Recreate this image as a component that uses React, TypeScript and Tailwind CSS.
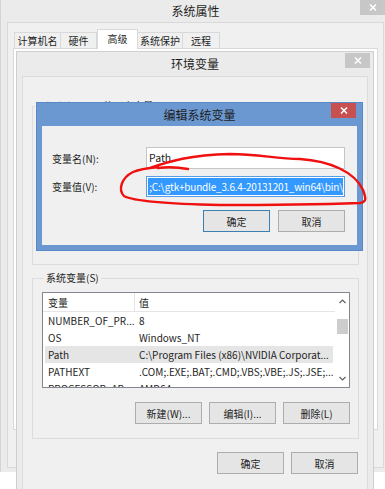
import React from 'react';

type Row = { name: string; value: string; selected?: boolean };

const rows: Row[] = [
  { name: 'NUMBER_OF_PR...', value: '8' },
  { name: 'OS', value: 'Windows_NT' },
  { name: 'Path', value: 'C:\\Program Files (x86)\\NVIDIA Corporat...', selected: true },
  { name: 'PATHEXT', value: '.COM;.EXE;.BAT;.CMD;.VBS;.VBE;.JS;.JSE;...' },
  { name: 'PROCESSOR_AR...', value: 'AMD64' },
];

function CloseBtn({ red = false }: { red?: boolean }) {
  return (
    <div className={`flex h-[15px] w-[25px] items-center justify-center ${red ? 'bg-[#c75050]' : 'bg-[#c7c7c7]'}`}>
      <svg width="8" height="7" viewBox="0 0 8 7">
        <path d="M1 0.5 L7 6.5 M7 0.5 L1 6.5" stroke="white" strokeWidth="1.5" />
      </svg>
    </div>
  );
}

function WinButton({ label, primary = false }: { label: string; primary?: boolean }) {
  return (
    <div
      className={`flex h-[22px] w-[67px] items-center justify-center border bg-[#e5e5e5] text-[10px] ${
        primary ? 'border-[#3c7fb1]' : 'border-[#adadad]'
      }`}
    >
      {label}
    </div>
  );
}

function Chevron({ down = false }: { down?: boolean }) {
  return (
    <svg width="7" height="5" viewBox="0 0 7 5">
      <path d={down ? 'M0.5 1 L3.5 4 L6.5 1' : 'M0.5 4 L3.5 1 L6.5 4'} stroke="#606060" strokeWidth="1.2" fill="none" />
    </svg>
  );
}

export default function App() {
  return (
    <div className="relative h-[489px] w-[385px] overflow-hidden bg-white font-['Noto_Sans_CJK_SC',sans-serif] text-[10px] text-[#1e1e1e]">
      {/* 系统属性 */}
      <div className="absolute left-0 top-0 flex h-[472px] w-[390px] flex-col border-l border-[#d4d4d4] bg-[#ebebeb]">
        <div className="grid h-[22px] grid-cols-[1fr_auto_1fr]">
          <div />
          <div className="pt-[3px] text-[12px] leading-[15px]">系统属性</div>
          <div className="flex justify-end pr-[5px]">
            <CloseBtn />
          </div>
        </div>
        <div className="mx-[6px] mb-[4px] flex-1 border border-[#d9d9d9] bg-[#f0f0f0] px-[5px] pt-[6px]">
          <div className="ml-px flex h-[19px] items-end">
            <div className="flex h-[16px] w-[47px] items-center justify-center border border-b-0 border-[#d9d9d9] bg-[#f0f0f0]">计算机名</div>
            <div className="flex h-[16px] w-[36px] items-center justify-center border border-b-0 border-l-0 border-[#d9d9d9] bg-[#f0f0f0]">硬件</div>
            <div className="relative z-10 -mb-px flex h-[20px] w-[41px] items-center justify-center border border-b-0 border-[#d9d9d9] bg-white pb-[2px]">高级</div>
            <div className="flex h-[16px] w-[45px] items-center justify-center border border-b-0 border-l-0 border-[#d9d9d9] bg-[#f0f0f0]">系统保护</div>
            <div className="flex h-[16px] w-[37px] items-center justify-center border border-b-0 border-l-0 border-[#d9d9d9] bg-[#f0f0f0]">远程</div>
          </div>
          <div className="h-[382px] border border-[#d9d9d9] bg-white" />
        </div>
      </div>

      {/* 环境变量 */}
      <div className="absolute left-[16px] top-[51px] flex h-[450px] w-[358px] flex-col border border-[#cfcfcf] bg-[#ebebeb]">
        <div className="grid h-[24px] grid-cols-[1fr_auto_1fr]">
          <div />
          <div className="pt-[4px] text-[12px] leading-[15px]">环境变量</div>
          <div className="flex justify-end pr-[3px] pt-px">
            <CloseBtn />
          </div>
        </div>
        <div className="mx-[5px] flex-1 border border-[#dcdcdc] bg-[#f0f0f0]">
          <fieldset className="ml-[9px] mr-[8px] mt-[22px] h-[166px] min-w-0 border border-[#dcdcdc]">
            <legend className="ml-[2px] px-[2px] leading-[14px]">Administrator 的用户变量(U)</legend>
          </fieldset>
          <fieldset className="ml-[9px] mr-[8px] mt-[6px] h-[168px] min-w-0 border border-[#dcdcdc] pl-[9px] pr-[8px]">
            <legend className="ml-[2px] px-[2px] leading-[14px]">系统变量(S)</legend>
            <div className="mt-[7px] flex h-[96px] border border-[#828790] bg-white text-[10px]">
              <div className="min-w-0 flex-1 overflow-hidden">
                <div className="flex h-[19px] items-center border-b border-[#e5e5e5]">
                  <div className="flex h-full w-[92px] shrink-0 items-center border-r border-[#e5e5e5] pl-[5px]">变量</div>
                  <div className="pl-[4px]">值</div>
                </div>
                {rows.map((r) => (
                  <div key={r.name} className="px-[2px]">
                    <div className={`flex h-[17px] items-center overflow-hidden whitespace-nowrap ${r.selected ? 'bg-[#e5e5e5]' : ''}`}>
                      <div className="w-[94px] shrink-0 overflow-hidden pl-[3px]">{r.name}</div>
                      <div>{r.value}</div>
                    </div>
                  </div>
                ))}
              </div>
              <div className="flex w-[14px] shrink-0 flex-col items-center">
                <div className="flex h-[17px] items-center">
                  <Chevron />
                </div>
                <div className="mt-[9px] h-[15px] w-[11px] bg-[#cdcdcd]" />
                <div className="flex-1" />
                <div className="flex h-[17px] items-center">
                  <Chevron down />
                </div>
              </div>
            </div>
            <div className="mt-[14px] flex justify-end gap-[7px]">
              <WinButton label="新建(W)..." />
              <WinButton label="编辑(I)..." />
              <WinButton label="删除(L)" />
            </div>
          </fieldset>
          <div className="mr-[9px] mt-[13px] flex justify-end gap-[7px]">
            <WinButton label="确定" />
            <WinButton label="取消" />
          </div>
        </div>
      </div>

      {/* 编辑系统变量 */}
      <div className="absolute left-[36px] top-[102px] flex h-[149px] w-[327px] flex-col border border-[#5a88c6] bg-[#6b98d0]">
        <div className="grid h-[23px] grid-cols-[1fr_auto_1fr]">
          <div />
          <div className="pt-[4px] text-[12px] leading-[15px]">编辑系统变量</div>
          <div className="flex justify-end pr-[6px]">
            <CloseBtn red />
          </div>
        </div>
        <div className="mx-[5px] mb-[5px] flex-1 bg-[#f0f0f0] pl-[10px] pr-[12px]">
          <div className="mt-[21px] flex h-[22px] items-center">
            <div className="w-[94px] shrink-0">变量名(N):</div>
            <div className="flex h-full flex-1 items-center border border-[#c5c5c5] bg-white pl-[2px] text-[10.5px]">Path</div>
          </div>
          <div className="mt-[7px] flex h-[21px] items-center">
            <div className="w-[94px] shrink-0">变量值(V):</div>
            <div className="h-full min-w-0 flex-1 border border-[#569de5] bg-white p-px">
              <div className="flex h-full items-center justify-end overflow-hidden whitespace-nowrap bg-[#3399ff] text-[10px] tracking-[-0.2px] text-white">
                ;C:\gtk+bundle_3.6.4-20131201_win64\bin\
              </div>
            </div>
          </div>
          <div className="mt-[13px] flex justify-end gap-[8px]">
            <WinButton label="确定" primary />
            <WinButton label="取消" />
          </div>
        </div>
      </div>

      {/* red hand-drawn mark */}
      <svg className="pointer-events-none absolute left-0 top-0" width="385" height="489" viewBox="0 0 385 489">
        <g stroke="#f01010" strokeWidth="2.4" fill="none" strokeLinecap="round" strokeLinejoin="round">
          <path d="M158 168 Q172 166 188 169" />
          <path d="M150 168 C170 161 190 155 230 154 C260 154 275 159 300 159 C330 161 355 172 363 190 C366 198 367 202 360 203 C330 204 280 205 220 205 C170 204 135 202 124 196 C118 190 121 178 133 172 C140 169 148 168 158 167" />
        </g>
      </svg>
    </div>
  );
}
